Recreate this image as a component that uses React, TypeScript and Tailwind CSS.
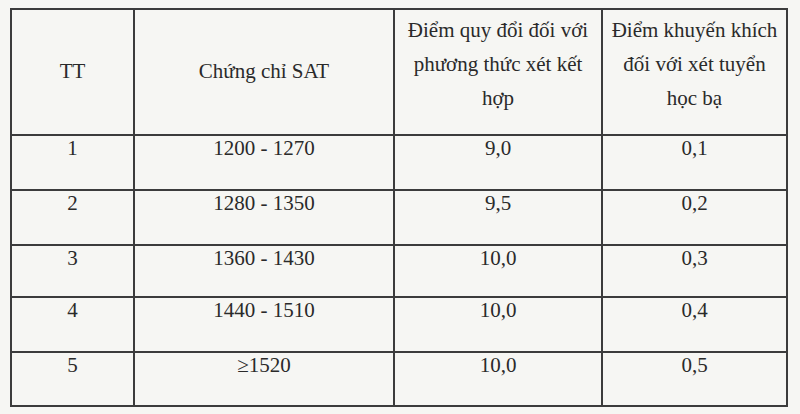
const rows = [
  { tt: "1", sat: "1200 - 1270", quyDoi: "9,0", khuyenKhich: "0,1", h: "h-[55px]" },
  { tt: "2", sat: "1280 - 1350", quyDoi: "9,5", khuyenKhich: "0,2", h: "h-[55px]" },
  { tt: "3", sat: "1360 - 1430", quyDoi: "10,0", khuyenKhich: "0,3", h: "h-[52px]" },
  { tt: "4", sat: "1440 - 1510", quyDoi: "10,0", khuyenKhich: "0,4", h: "h-[55px]" },
  { tt: "5", sat: "≥1520", quyDoi: "10,0", khuyenKhich: "0,5", h: "h-[54px]" },
];

const cell = "border-2 border-[#3c3c3c] text-center align-top pt-0 leading-[24px]";

export default function App() {
  return (
    <div
      className="w-[800px] h-[414px] bg-[#f6f6f3] text-[#2a2a2a] pl-[10px] pt-[8px] overflow-hidden"
      style={{ fontFamily: '"Liberation Serif", "Times New Roman", serif' }}
    >
      <table className="border-collapse text-[21px] table-fixed w-[776px]">
        <colgroup>
          <col className="w-[123px]" />
          <col className="w-[260px]" />
          <col className="w-[208px]" />
          <col className="w-[185px]" />
        </colgroup>
        <thead>
          <tr className="h-[126px]">
            <th className="border-2 border-[#3c3c3c] font-normal align-middle">TT</th>
            <th className="border-2 border-[#3c3c3c] font-normal align-middle">Chứng chỉ SAT</th>
            <th className="border-2 border-[#3c3c3c] font-normal align-top pt-[3px] leading-[34px]">
              Điểm quy đổi đối với
              <br />
              phương thức xét kết
              <br />
              hợp
            </th>
            <th className="border-2 border-[#3c3c3c] font-normal align-top pt-[3px] leading-[34px]">
              Điểm khuyến khích
              <br />
              đối với xét tuyển
              <br />
              học bạ
            </th>
          </tr>
        </thead>
        <tbody>
          {rows.map((r) => (
            <tr key={r.tt} className={r.h}>
              <td className={cell}>{r.tt}</td>
              <td className={cell}>{r.sat}</td>
              <td className={cell}>{r.quyDoi}</td>
              <td className={cell}>{r.khuyenKhich}</td>
            </tr>
          ))}
        </tbody>
      </table>
    </div>
  );
}
